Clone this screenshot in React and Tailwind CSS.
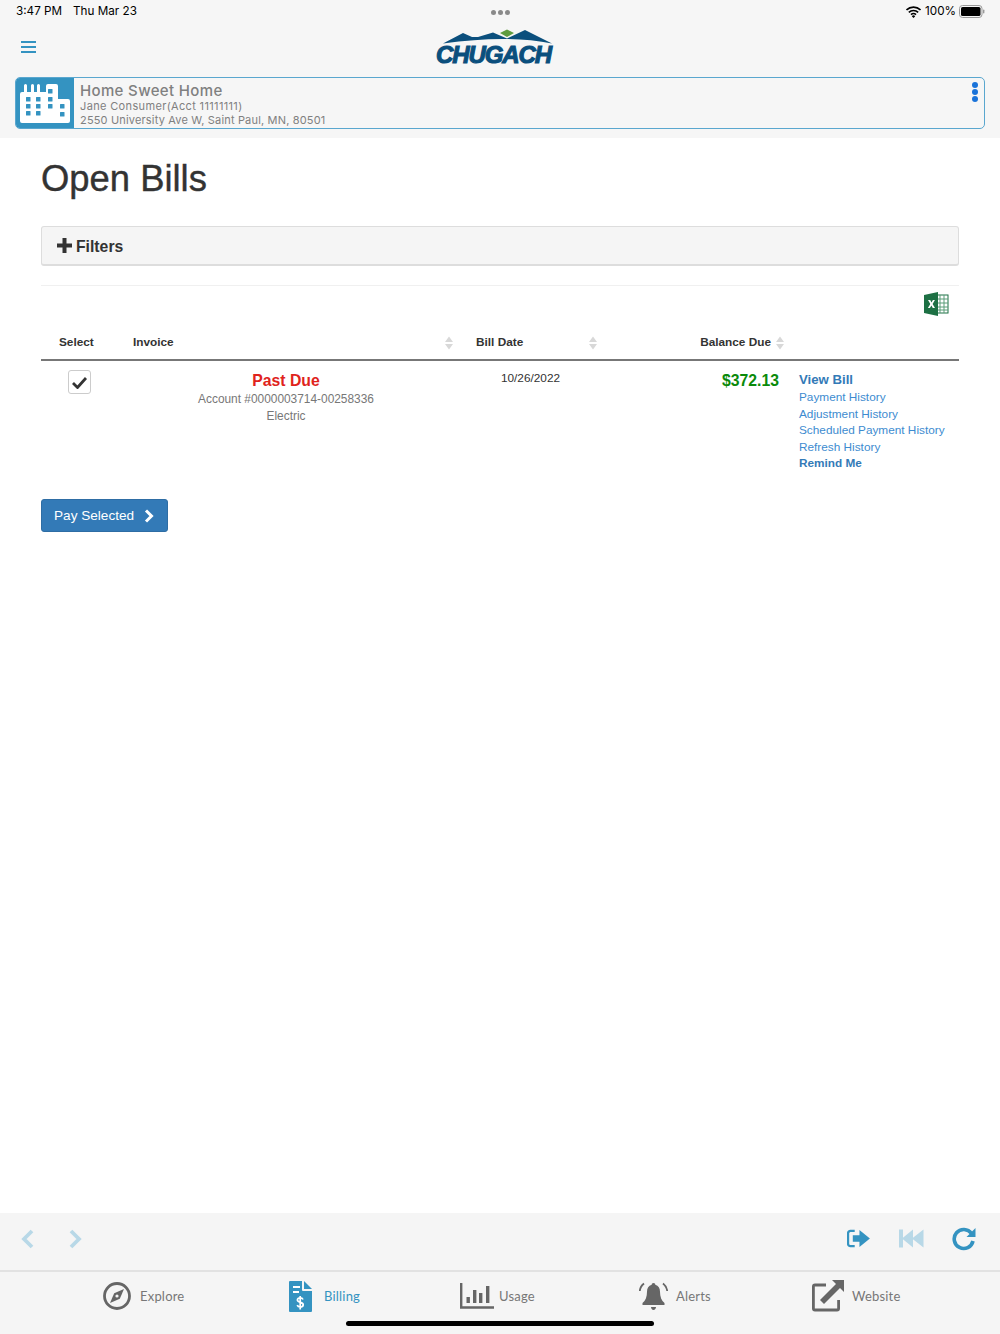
const Sort = ({ className = "" }) => (
  <svg width="10" height="14" viewBox="0 0 10 14" className={className}>
    <path d="M5 0.5 L9 6 H1 Z M5 13.5 L9 8 H1 Z" fill="#d8d8d8" />
  </svg>
);

const win = [
  [6, 13], [16, 13], [6, 20], [16, 20], [6, 27], [16, 27],
  [28, 5], [28, 13], [28, 20],
  [40, 20], [40, 28],
];

const Building = () => (
  <svg width="50" height="39" viewBox="0 0 50 39">
    <path fill="#fff" d="M2 39 a2 2 0 0 1 -2 -2 V10 a2 2 0 0 1 2 -2 H4 V1.5 a1.5 1.5 0 0 1 3 0 V8 H11 V1.5 a1.5 1.5 0 0 1 3 0 V8 H17 V1.5 a1.5 1.5 0 0 1 3 0 V8 H26 V2 a2 2 0 0 1 2 -2 H36 a2 2 0 0 1 2 2 V15 H48 a2 2 0 0 1 2 2 V37 a2 2 0 0 1 -2 2 Z" />
    {win.map(([x, y]) => <rect key={`${x}-${y}`} x={x} y={y} width="4.5" height="4.5" rx=".6" fill="#3493c1" />)}
  </svg>
);

const Logo = () => (
  <div className="relative w-[120px] h-[40px]">
    <svg width="120" height="40" viewBox="0 0 120 40" className="absolute left-0 top-0">
      <path d="M9 14.5 L29 4 L38 8 L44 8 L59 3.5 L73 9.5 L91 1 L118 14.5 Q73 5.5 9 14.5 Z" fill="#0b4f7d" />
      <path d="M66 4 L73 0.5 L80 4 L73 8 Z" fill="#5f9c3f" />
    </svg>
    <span className="absolute left-0 top-[14px] w-[119px] text-center text-[24px] leading-[24px] font-black italic text-[#0b4f7d] font-['Liberation_Sans',sans-serif] tracking-[-1.1px] [-webkit-text-stroke:1.1px_#0b4f7d]">CHUGACH</span>
  </div>
);

const Excel = () => (
  <svg width="25" height="24" viewBox="0 0 25 24">
    <rect x="12" y="3" width="12" height="18" fill="#fff" stroke="#1d7044" strokeWidth="1" />
    <path d="M16 3v18M20 3v18M12 7h12M12 11h12M12 15h12M12 18h12" stroke="#5a9c78" strokeWidth="1" fill="none" />
    <path d="M0 3 L14 0 V24 L0 21 Z" fill="#1d7044" />
    <path d="M4 8 h2.2 l1.3 2.6 l1.4 -2.6 h2 l-2.3 4 l2.4 4 h-2.2 l-1.4 -2.6 l-1.5 2.6 h-2 l2.4 -4 Z" fill="#fff" />
  </svg>
);

const Compass = () => (
  <svg width="28" height="28" viewBox="0 0 28 28">
    <circle cx="14" cy="14" r="12.5" fill="none" stroke="#666" strokeWidth="2.8" />
    <path d="M21 7 L16.8 16.8 L7 21 L11.2 11.2 Z" fill="#666" />
    <circle cx="14" cy="14" r="1.6" fill="#f5f5f5" />
  </svg>
);

const BillIcon = () => (
  <svg width="23" height="31" viewBox="0 0 23 31">
    <path d="M1 0 H13 V9 a1 1 0 0 0 1 1 H23 V30 a1 1 0 0 1 -1 1 H1 a1 1 0 0 1 -1 -1 V1 a1 1 0 0 1 1 -1 Z" fill="#3493c1" />
    <path d="M15 0 L23 8 H15 Z" fill="#3493c1" />
    <path d="M4 5h7v2H4zM4 10h6v2H4z" fill="#fff" />
    <path d="M14 18.5 c-.5 -1.2 -1.6 -1.7 -2.8 -1.7 c-1.6 0 -2.8 .9 -2.8 2.3 c0 3 5.8 1.6 5.8 4.6 c0 1.4 -1.3 2.3 -3 2.3 c-1.3 0 -2.5 -.6 -3 -1.8 M11.2 15 v13.5" fill="none" stroke="#fff" strokeWidth="1.7" />
  </svg>
);

const UsageIcon = () => (
  <svg width="34" height="26" viewBox="0 0 34 26">
    <path d="M1.2 0 V24.5 H34" fill="none" stroke="#666" strokeWidth="2.4" />
    <path d="M6.5 14h3.4v6H6.5zM13 7h3.4v13H13zM19 10h3.4v10H19zM26 3h3.4v17H26z" fill="#666" />
  </svg>
);

const Bell = () => (
  <svg width="29" height="29" viewBox="0 0 29 29">
    <path d="M14.5 1 c1.2 0 1.8 .8 1.8 1.7 c3.2 .9 4.7 3.6 4.7 7 c0 5 1.5 9 4.5 11.3 v2 H3.5 v-2 c3 -2.3 4.5 -6.3 4.5 -11.3 c0 -3.4 1.5 -6.1 4.7 -7 c0 -.9 .6 -1.7 1.8 -1.7 Z M12 25 h5 c0 1.5 -1 3 -2.5 3 s-2.5 -1.5 -2.5 -3 Z" fill="#666" />
    <path d="M5 1.5 C2.5 3.5 1 6 .8 9 M24 1.5 C26.5 3.5 28 6 28.2 9" fill="none" stroke="#666" strokeWidth="1.8" />
  </svg>
);

const External = () => (
  <svg width="32" height="32" viewBox="0 0 32 32">
    <path d="M14 5 H3 a1.6 1.6 0 0 0 -1.6 1.6 V28.4 A1.6 1.6 0 0 0 3 30 H25 a1.6 1.6 0 0 0 1.6 -1.6 V20" fill="none" stroke="#666" strokeWidth="2.8" />
    <path d="M20 0 H32 V12 L28 8 L12 24 L8 20 L24 4 Z" fill="#666" />
  </svg>
);

const Tab = ({ icon, label, active, className }) => (
  <div className={`flex items-center ${className}`}>
    {icon}
    <span className={`text-[13px] leading-none tracking-[.2px] font-['Lato',sans-serif] ${active ? "text-[#3493c1]" : "text-[#777]"}`}>{label}</span>
  </div>
);

const links = ["Payment History", "Adjustment History", "Scheduled Payment History", "Refresh History"];
const gridCols = "grid grid-cols-[84px_343px_137px_185px_168px]";

export default function App() {
  return (
    <div className="relative w-[1000px] h-[1334px] flex flex-col bg-white font-['Liberation_Sans',sans-serif] text-[#333]">
      <header className="bg-[#f6f6f6] h-[138px] shrink-0 flex flex-col">
        <div className="h-[24px] pl-[16px] pr-[15px] flex items-center justify-between text-[11.7px] text-black font-['Inter',sans-serif]">
          <div className="flex gap-[11px] w-[300px]">
            <span>3:47 PM</span>
            <span>Thu Mar 23</span>
          </div>
          <div className="flex gap-[2px]">
            <span className="w-[5px] h-[5px] rounded-full bg-[#8a8a8a]" />
            <span className="w-[5px] h-[5px] rounded-full bg-[#8a8a8a]" />
            <span className="w-[5px] h-[5px] rounded-full bg-[#8a8a8a]" />
          </div>
          <div className="flex items-center justify-end gap-[3px] w-[300px]">
            <svg width="15" height="12" viewBox="0 0 15 12" className="mr-[1px]">
              <path d="M.5 4 a10 10 0 0 1 14 0 M2.8 6.4 a6.8 6.8 0 0 1 9.4 0 M5 8.7 a3.6 3.6 0 0 1 5 0" fill="none" stroke="#000" strokeWidth="1.6" />
              <path d="M7.5 12 L5.8 10.2 a2.4 2.4 0 0 1 3.4 0 Z" fill="#000" />
            </svg>
            <span>100%</span>
            <svg width="26" height="13" viewBox="0 0 26 13">
              <rect x=".5" y=".5" width="22.5" height="12" rx="3" fill="none" stroke="#999" />
              <rect x="2" y="2" width="19.5" height="9" rx="1.6" fill="#000" />
              <rect x="24" y="4.5" width="1.4" height="4" rx=".7" fill="#999" />
            </svg>
          </div>
        </div>
        <div className="h-[53px] relative flex items-center pl-[21px]">
          <div className="flex flex-col gap-[3px] w-[15px] mt-[-7px]">
            <span className="h-[2px] bg-[#3493c1]" />
            <span className="h-[2px] bg-[#3493c1]" />
            <span className="h-[2px] bg-[#3493c1]" />
          </div>
          <div className="absolute left-[434px] top-[5px]"><Logo /></div>
        </div>
        <div className="mx-[15px] h-[52px] border border-[#5aa7cf] rounded-[5px] flex overflow-hidden bg-[#f6f6f6]">
          <div className="w-[58px] shrink-0 bg-[#3493c1] flex items-center justify-center border-r border-[#3493c1]">
            <Building />
          </div>
          <div className="flex-1 pl-[6px] pt-[5px] text-[#808080] font-['Inter',sans-serif]">
            <div className="text-[15px] leading-[16px] font-medium tracking-[.35px]">Home Sweet Home</div>
            <div className="text-[11px] leading-[14px] tracking-[.35px]">Jane Consumer(Acct 11111111)</div>
            <div className="text-[11px] leading-[14px] tracking-[.17px]">2550 University Ave W, Saint Paul, MN, 80501</div>
          </div>
          <div className="w-[19px] pt-[4px] flex flex-col gap-[1px] items-center shrink-0">
            <span className="w-[6px] h-[6px] rounded-full bg-[#1a73d9]" />
            <span className="w-[6px] h-[6px] rounded-full bg-[#1a73d9]" />
            <span className="w-[6px] h-[6px] rounded-full bg-[#1a73d9]" />
          </div>
        </div>
      </header>

      <main className="flex-1 px-[41px] pt-[21px]">
        <h1 className="text-[36.4px] leading-[40px] text-[#333] [-webkit-text-stroke:.4px_#333]">Open Bills</h1>
        <div className="mt-[27px] h-[40px] bg-[#f5f5f5] border border-[#ddd] border-b-2 rounded-[3px] flex items-center pl-[15px] gap-[4px] text-[#333] text-[15.75px] font-bold">
          <svg width="15" height="15" viewBox="0 0 15 15"><path d="M5.5 0h4v5.5H15v4H9.5V15h-4V9.5H0v-4h5.5z" fill="#333" /></svg>
          <span className="mt-[2px]">Filters</span>
        </div>
        <div className="mt-[19px] h-[1px] bg-[#f0f0f0]" />
        <div className="flex justify-end pr-[10px] mt-[6px] h-[24px]"><Excel /></div>
        <div className={`${gridCols} mt-[12px] h-[30px] items-center text-[11.8px] font-bold border-b-2 border-[#777] box-content pb-[1px]`}>
          <div className="pl-[18px]">Select</div>
          <div className="pl-[8px] pr-[14px] flex justify-between items-center"><span>Invoice</span><Sort /></div>
          <div className="pl-[8px] pr-[7px] flex justify-between items-center"><span>Bill Date</span><Sort /></div>
          <div className="pr-[5px] flex justify-end items-center gap-[4px]"><span>Balance Due</span><Sort /></div>
          <div />
        </div>
        <div className={`${gridCols} h-[138px]`}>
          <div className="pl-[27px] pt-[9px]">
            <div className="w-[23px] h-[24px] border border-[#ccc] rounded-[3px] flex items-center justify-center">
              <svg width="15" height="13" viewBox="0 0 15 13"><path d="M1 7 L5.5 11.5 L14 2" fill="none" stroke="#333" strokeWidth="2.8" /></svg>
            </div>
          </div>
          <div className="pr-[21px] pt-[10px] text-center">
            <div className="text-[#e0231c] text-[15.75px] leading-[20px] font-bold">Past Due</div>
            <div className="text-[#777] text-[11.9px] leading-[17px]">Account #0000003714-00258336</div>
            <div className="text-[#777] text-[11.9px] leading-[16px]">Electric</div>
          </div>
          <div className="pr-[12px] pt-[9px] text-center text-[11.8px] leading-[16px] text-[#333]">10/26/2022</div>
          <div className="pr-[11px] pt-[10px] text-right text-[#0a8a0a] text-[15.75px] leading-[20px] font-bold">$372.13</div>
          <div className="pl-[9px] pt-[9px] text-[11.8px] leading-[16.6px] text-[#3d8bd0]">
            <div className="text-[#337ab7] text-[13.2px] leading-[19px] font-bold">View Bill</div>
            <div>
              {links.map((l) => <div key={l}>{l}</div>)}
            </div>
            <div className="text-[#337ab7] font-bold">Remind Me</div>
          </div>
        </div>
        <button className="w-[127px] h-[33px] bg-[#337ab7] border border-[#2e6da4] rounded-[3px] text-white text-[13.6px] flex items-center pl-[12px] gap-[10px] font-['Liberation_Sans',sans-serif]">
          <span className="mt-[1px]">Pay Selected</span>
          <svg width="10" height="14" viewBox="0 0 10 14"><path d="M2 1.5 L7.5 7 L2 12.5" fill="none" stroke="#fff" strokeWidth="3" /></svg>
        </button>
      </main>

      <div className="h-[57px] shrink-0 bg-[#f5f5f5] flex items-center justify-between pl-[21px] pr-[24px] pb-[6px]">
        <div className="flex items-center gap-[35px]">
          <svg width="13" height="20" viewBox="0 0 13 20"><path d="M11 2 L3 10 L11 18" fill="none" stroke="#b8d8e7" strokeWidth="3.8" /></svg>
          <svg width="13" height="20" viewBox="0 0 13 20"><path d="M2 2 L10 10 L2 18" fill="none" stroke="#b8d8e7" strokeWidth="3.8" /></svg>
        </div>
        <div className="flex items-center gap-[29px]">
          <svg width="23" height="19" viewBox="0 0 24 20">
            <path d="M8 2 H3.5 A2.5 2.5 0 0 0 1 4.5 V15.5 A2.5 2.5 0 0 0 3.5 18 H8" fill="none" stroke="#3493c1" strokeWidth="2.4" />
            <path d="M6 6.5 H13 V1 L24 10 L13 19 V13.5 H6 Z" fill="#3493c1" />
          </svg>
          <svg width="25" height="19" viewBox="0 0 25 19">
            <path d="M0 .5h4v18H0z M3 9.5 L14 .5 V18.5 Z M13 9.5 L24.5 .5 V18.5 Z" fill="#b8d8e7" />
          </svg>
          <svg width="24" height="24" viewBox="0 0 24 24" className="-ml-[1px]">
            <path d="M19.5 6.5 A9.5 9.5 0 1 0 21 14" fill="none" stroke="#3493c1" strokeWidth="3.6" />
            <path d="M23.5 1 V10 H14.5 Z" fill="#3493c1" />
          </svg>
        </div>
      </div>
      <nav className="h-[64px] shrink-0 bg-[#f5f5f5] border-t-2 border-[#e2e2e2] flex items-start pt-[8px]">
        <Tab className="ml-[103px] w-[186px] gap-[9px] h-[32px]" icon={<Compass />} label="Explore" />
        <Tab className="w-[171px] gap-[12px] h-[32px]" icon={<BillIcon />} label="Billing" active />
        <Tab className="w-[179px] gap-[5px] h-[32px]" icon={<UsageIcon />} label="Usage" />
        <Tab className="w-[173px] gap-[8px] h-[32px]" icon={<Bell />} label="Alerts" />
        <Tab className="gap-[8px] h-[32px]" icon={<External />} label="Website" />
      </nav>
      <div className="absolute left-[346px] bottom-[8px] w-[308px] h-[5px] rounded-full bg-black" />
    </div>
  );
}
